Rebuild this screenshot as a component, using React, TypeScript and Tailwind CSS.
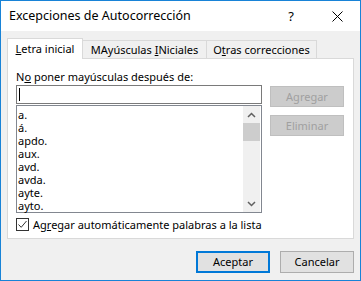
import React from 'react';

const font = { fontFamily: '"Noto Sans", "Open Sans", sans-serif' };

const items = ['a.', 'á.', 'apdo.', 'aux.', 'avd.', 'avda.', 'ayte.', 'ayto.'];

export default function App() {
  return (
    <div
      style={font}
      className="w-[361px] h-[281px] border border-[#1883d7] bg-[#f0f0f0] flex flex-col text-[11px] text-black leading-[14px] overflow-hidden"
    >
      {/* title bar */}
      <div className="h-[30px] bg-white flex items-center shrink-0">
        <span className="pl-[8px] text-[12.5px] flex-1">Excepciones de Autocorrección</span>
        <span className="w-[46px] text-center text-[13px]">?</span>
        <div className="w-[46px] flex justify-center">
          <svg width="11" height="11" viewBox="0 0 11 11">
            <path d="M0.5 0.5 L10.5 10.5 M10.5 0.5 L0.5 10.5" stroke="#000" strokeWidth="1" fill="none" />
          </svg>
        </div>
      </div>

      {/* tabs */}
      <div className="mt-[7px] ml-[6px] flex items-end h-[21px]">
        <div className="w-[76px] h-[21px] bg-white border border-[#d9d9d9] border-b-0 relative z-10 flex items-center justify-center pb-[1px]">
          <span><span className="underline">L</span>etra inicial</span>
        </div>
        <div className="w-[124px] h-[19px] bg-[#f0f0f0] border border-[#d9d9d9] border-l-0 border-b-0 flex items-center justify-center">
          <span>MAyúsculas <span className="underline">I</span>Niciales</span>
        </div>
        <div className="w-[110px] h-[19px] bg-[#f0f0f0] border border-[#d9d9d9] border-l-0 border-b-0 flex items-center justify-center">
          <span>O<span className="underline">t</span>ras correcciones</span>
        </div>
      </div>

      {/* panel */}
      <div className="mx-[6px] -mt-px h-[181px] bg-white border border-[#d9d9d9] pt-[11px] pl-[8px]">
        <div className="h-[14px]">N<span className="underline">o</span> poner mayúsculas después de:</div>
        <div className="mt-[1px] flex">
          <div className="w-[246px] flex flex-col">
            <div className="h-[19px] border border-[#7a7a7a] relative">
              <div className="absolute left-[2px] top-[2px] w-px h-[13px] bg-black" />
            </div>
            <div className="mt-[1px] h-[108px] border border-[#828790] flex">
              <div className="flex-1 pl-[1px] pt-[2px] leading-[13px]">
                {items.map((t) => (
                  <div key={t} className="h-[13px]">{t}</div>
                ))}
              </div>
              <div className="w-[17px] mr-px bg-[#f0f0f0] flex flex-col">
                <div className="h-[17px] flex items-center justify-center">
                  <svg width="9" height="6" viewBox="0 0 9 6">
                    <path d="M1 5 L4.5 1.5 L8 5" stroke="#606060" strokeWidth="1.5" fill="none" />
                  </svg>
                </div>
                <div className="h-[18px] bg-[#cdcdcd]" />
                <div className="flex-1" />
                <div className="h-[17px] flex items-center justify-center">
                  <svg width="9" height="6" viewBox="0 0 9 6">
                    <path d="M1 1 L4.5 4.5 L8 1" stroke="#606060" strokeWidth="1.5" fill="none" />
                  </svg>
                </div>
              </div>
            </div>
          </div>
          <div className="ml-[8px] flex flex-col">
            <div className="mt-[1px] w-[74px] h-[21px] bg-[#cccccc] border border-[#bfbfbf] text-[#a0a0a0] flex items-center justify-center">Agregar</div>
            <div className="mt-[8px] w-[74px] h-[21px] bg-[#cccccc] border border-[#bfbfbf] text-[#a0a0a0] flex items-center justify-center">Eliminar</div>
          </div>
        </div>
        <div className="mt-[5px] flex items-center h-[13px]">
          <div className="w-[13px] h-[13px] border border-[#333] bg-white flex items-center justify-center">
            <svg width="11" height="11" viewBox="0 0 11 11">
              <path d="M1.5 5.5 L4.2 8.3 L9.5 2" stroke="#333" strokeWidth="1" fill="none" />
            </svg>
          </div>
          <span className="ml-[4px]">Ag<span className="underline">r</span>egar automáticamente palabras a la lista</span>
        </div>
      </div>

      {/* bottom buttons */}
      <div className="mt-[12px] flex justify-end pr-[6px] gap-[10px]">
        <div className="w-[74px] h-[22px] bg-[#e1e1e1] border-2 border-[#0078d7] flex items-center justify-center">Aceptar</div>
        <div className="w-[74px] h-[22px] bg-[#e1e1e1] border border-[#adadad] flex items-center justify-center">Cancelar</div>
      </div>
    </div>
  );
}
